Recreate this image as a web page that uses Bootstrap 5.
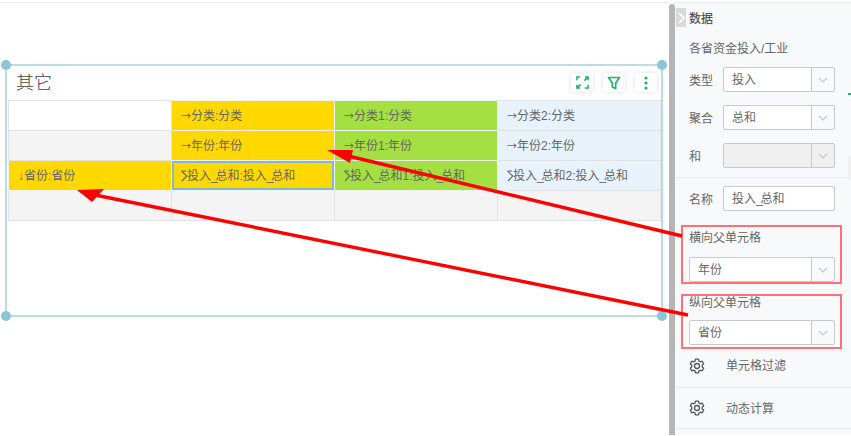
<!DOCTYPE html>
<html lang="zh-CN"><head><meta charset="utf-8"><title>其它</title>
<link href="https://cdn.jsdelivr.net/npm/bootstrap@5.3.0/dist/css/bootstrap.min.css" rel="stylesheet">
<style>
html,body{height:100%;overflow:hidden;background:#fff}
body{font:12px/1.5 "Liberation Sans","Noto Sans CJK SC",sans-serif;color:#666}
.page{position:relative;width:851px;height:436px;padding-top:2px}
.canvas-area{width:669px;height:433px;padding:62px 0 0 5px;flex:none;border-top:1px solid #e9ecef}
.frame{position:relative;width:658px;height:253px;border:2px solid #b9dde4;padding:2px 0 0 1px;margin-top:-1px}
.dot{position:absolute;width:10px;height:10px;border-radius:50%;background:#8cc4d8}
.d1{left:-6px;top:-6px}.d2{right:-6px;top:-6px}.d3{left:-6px;bottom:-6px}.d4{right:-6px;bottom:-6px}
.head{height:32px;padding:0 4px 3px 8px}
.ptitle{font-size:18px;line-height:30px;color:#444;font-weight:300}
.tbtn{width:22px;height:19px;border-radius:3px;background:#fff;box-shadow:0 0 4px rgba(0,0,0,.14);display:flex;align-items:center;justify-content:center;margin-left:10px}
table.grid{width:653px;table-layout:fixed;margin:0;border-collapse:collapse}
table.grid td{height:30px;padding:2px 9px 0;border:1px solid #e3e3e3;font-size:12px;line-height:26px;color:#666;white-space:nowrap;overflow:hidden;background:#fff}
table.grid td.c-gray{background:#f4f4f4}
table.grid td.c-y{background:#ffd800;border-color:#f2f2f2}
table.grid td.c-g{background:#a4e042;border-color:#f2f2f2}
table.grid td.c-b{background:#e8f2fa}
table.grid td.first{padding-left:9px}
table.grid td.sel{box-shadow:inset 0 0 0 2px #7fb8d0}
.ar{font-family:"Noto Sans CJK SC",sans-serif;font-size:10px}
.us{letter-spacing:-2.200px}
.sg{width:8px;height:12px;margin:0 -1px 0 -1px;vertical-align:-2px}
.scroll{width:6px;background:#b5b5b5;border-radius:3px 3px 0 0;margin-top:2px;flex:none}
.side{width:176px;height:433px;background:#f7f9fb;flex:none;position:relative;border-top:1px solid #e9ecef}
.tog{position:absolute;left:1px;top:5px;width:10px;height:19px;background:#d9d9d9;display:flex;align-items:center;justify-content:center}
.s-h{padding:6px 0 0 14px;font-size:12px;line-height:20px;font-weight:500;color:#555}
.s-sub{padding:11px 0 0 14px;line-height:18px;height:38px;color:#666}
.s-row{padding:0 16px 0 14px;height:25px;margin-bottom:13px;align-items:center}
.s-row label{width:34px;flex:none;margin:0;padding-top:2px}
.ig{flex:1 1 auto;height:25px;flex-wrap:nowrap}
.ig .form-control{height:25px;min-height:0;padding:2px 8px 0;font-size:12px;line-height:21px;color:#666;border-color:#c9c9c9;border-radius:2px;box-shadow:none}
.ig .input-group-text{width:24px;height:25px;padding:0;justify-content:center;background:transparent;border-color:#c9c9c9;border-radius:0 2px 2px 0;color:#c8c8c8}
.ig.off .form-control,.ig.off .input-group-text{background:#f0f0f0}
.sep{border-top:1px solid #e9ecef;margin:-4px 0 8px 0}
.redbox{border:2px solid #ff6f78;margin:0 9px 0 6px;padding:0 5px 0 6px}
.r1{height:59px;margin-top:14px}
.r2{height:55px;margin-top:10px}
.redbox .lbl{line-height:18px;height:30px;padding-top:2px}
.r2 .lbl{height:27px;margin-top:-3px;padding-top:1px}
.gear{height:41px;padding:0 0 0 14px;align-items:center;border-bottom:1px solid #e9ecef}
.gear.g1{height:39px;padding-bottom:5px}
.gear span{margin-left:21px;padding-top:1px}
.edge1{position:absolute;right:0;top:90px;width:3px;height:2px;background:#1fb56f}
.edge2{position:absolute;right:0;top:153px;width:3px;height:24px;background:#f0f0f0}
.arrows{position:absolute;left:0;top:0;width:851px;height:436px;pointer-events:none}
</style></head><body>
<div class="page">
<svg width="0" height="0" class="d-block position-absolute"><defs>
<symbol id="chev" viewBox="0 0 10 6"><path d="M1 1l4 4 4-4" fill="none" stroke="currentColor" stroke-width="1.2"/></symbol>
<symbol id="sig" viewBox="0 0 8 12"><path d="M1.500 1H6M1.500 1L6.800 6 2 11" fill="none" stroke="#666" stroke-width="1.100"/></symbol>
<symbol id="cog" viewBox="0 0 16 16"><path d="M6.500 1.200h3l.5 1.900 1.300.7 1.900-.6 1.500 2.600-1.400 1.300v1.800l1.400 1.300-1.500 2.600-1.900-.6-1.300.7-.5 1.900h-3L6 12.900l-1.300-.7-1.900.6-1.500-2.600 1.400-1.300V7.100L1.300 5.800l1.500-2.600 1.900.6L6 3.100z" fill="none" stroke="#555" stroke-width="1.300" stroke-linejoin="round"/><circle cx="8" cy="8" r="2.500" fill="none" stroke="#555" stroke-width="1.300"/></symbol>
</defs></svg>
<div class="d-flex">
<div class="canvas-area">
<div class="frame">
<i class="dot d1"></i><i class="dot d2"></i><i class="dot d3"></i><i class="dot d4"></i>
<div class="head d-flex align-items-center justify-content-between">
<div class="ptitle">其它</div>
<div class="d-flex">
<div class="tbtn"><svg width="13" height="13" viewBox="0 0 14 14" fill="none" stroke="#1fb56f" stroke-width="1.700"><path d="M1 4.500V1h3.500M9.500 1H13v3.500M13 9.500V13H9.500M4.500 13H1V9.500M9 5l3-3M5 9l-3 3"/></svg></div>
<div class="tbtn"><svg width="14" height="14" viewBox="0 0 14 14" fill="none" stroke="#1fb56f" stroke-width="1.700" stroke-linejoin="round"><path d="M1.500 1.500h11L8.700 7v5.500L5.300 11V7z"/></svg></div>
<div class="tbtn"><svg width="4" height="14" viewBox="0 0 4 14" fill="#1fb56f"><circle cx="2" cy="2" r="1.600"/><circle cx="2" cy="7" r="1.600"/><circle cx="2" cy="12" r="1.600"/></svg></div>
</div></div>
<table class="grid table"><tbody>
<tr><td></td><td class="c-y"><span class="ar">→</span>分类:分类</td><td class="c-g"><span class="ar">→</span>分类1:分类</td><td class="c-b"><span class="ar">→</span>分类2:分类</td></tr>
<tr><td class="c-gray"></td><td class="c-y"><span class="ar">→</span>年份:年份</td><td class="c-g"><span class="ar">→</span>年份1:年份</td><td class="c-b"><span class="ar">→</span>年份2:年份</td></tr>
<tr><td class="c-y first">↓省份:省份</td><td class="c-y sel"><svg class="sg"><use href="#sig"/></svg>投入<span class="us">_</span>总和:投入<span class="us">_</span>总和</td><td class="c-g"><svg class="sg"><use href="#sig"/></svg>投入<span class="us">_</span>总和1:投入<span class="us">_</span>总和</td><td class="c-b"><svg class="sg"><use href="#sig"/></svg>投入<span class="us">_</span>总和2:投入<span class="us">_</span>总和</td></tr>
<tr><td class="c-gray"></td><td class="c-gray"></td><td class="c-gray"></td><td class="c-gray"></td></tr>
</tbody></table>
</div></div>
<div class="scroll"></div>
<aside class="side">
<div class="tog"><svg width="7" height="12" viewBox="0 0 7 12" fill="none" stroke="#fff" stroke-width="1.600"><path d="M1 1l5 5-5 5"/></svg></div>
<div class="s-h">数据</div>
<div class="s-sub">各省资金投入/工业</div>
<div class="s-row d-flex"><label>类型</label><div class="input-group ig"><span class="form-control">投入</span><span class="input-group-text"><svg width="10" height="6"><use href="#chev"/></svg></span></div></div>
<div class="s-row d-flex"><label>聚合</label><div class="input-group ig"><span class="form-control">总和</span><span class="input-group-text"><svg width="10" height="6"><use href="#chev"/></svg></span></div></div>
<div class="s-row d-flex"><label>和</label><div class="input-group ig off"><span class="form-control"></span><span class="input-group-text"><svg width="10" height="6"><use href="#chev"/></svg></span></div></div>
<div class="sep"></div>
<div class="s-row d-flex mb-0"><label>名称</label><div class="input-group ig"><span class="form-control">投入<span class="us">_</span>总和</span></div></div>
<div class="redbox r1"><div class="lbl">横向父单元格</div><div class="input-group ig"><span class="form-control">年份</span><span class="input-group-text"><svg width="10" height="6"><use href="#chev"/></svg></span></div></div>
<div class="redbox r2"><div class="lbl">纵向父单元格</div><div class="input-group ig"><span class="form-control">省份</span><span class="input-group-text"><svg width="10" height="6"><use href="#chev"/></svg></span></div></div>
<div class="gear g1 d-flex"><svg width="16" height="16"><use href="#cog"/></svg><span>单元格过滤</span></div>
<div class="gear d-flex"><svg width="16" height="16"><use href="#cog"/></svg><span>动态计算</span></div>
<i class="edge1"></i><i class="edge2"></i>
</aside>
</div>
<svg class="arrows" viewBox="0 0 851 436"><g fill="#ff0000"><path d="M327 150L353 150 350 163z"/><path d="M77 190L104 189 92 202z"/></g><g stroke="#ff0000" stroke-width="3.400" fill="none"><path d="M344 155L682 236"/><path d="M95 195L688 315"/></g></svg>
</div>
</body></html>
